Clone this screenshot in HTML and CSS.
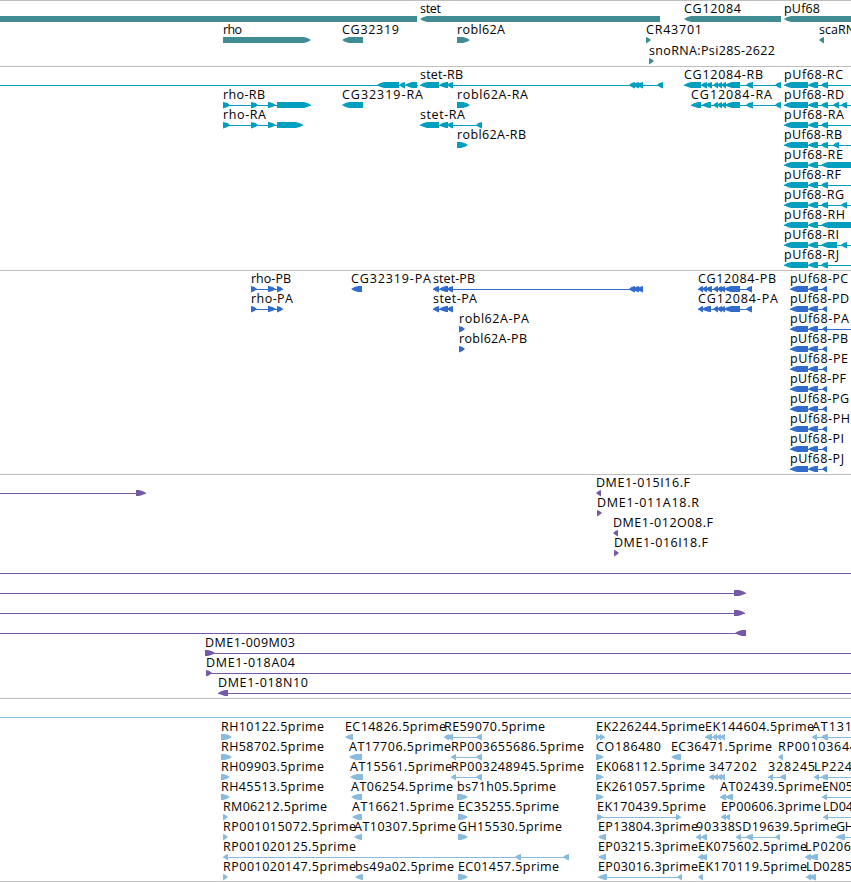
FILE: index.html
```html
<!DOCTYPE html>
<html lang="en">
<head>
    <meta charset="UTF-8">
    <meta name="viewport" content="width=device-width, initial-scale=1.0">
    <title>Genome Browser</title>
    <link rel="stylesheet" href="styles.css">
</head>
<body>
    <main class="browser">
        <section class="track genes"><svg id="genes" height="65"></svg></section>
        <section class="track transcripts"><svg id="transcripts" height="203"></svg></section>
        <section class="track proteins"><svg id="proteins" height="203"></svg></section>
        <section class="track clones"><svg id="clones" height="223"></svg></section>
        <section class="track spacer"></section>
        <section class="track ests"><svg id="ests" height="163"></svg></section>
    </main>
    <script src="script.js"></script>
</body>
</html>
```
FILE: styles.css
```css
body {
    margin: 0;
    background: white;
    overflow: hidden;
}
.browser {
    display: flex;
    flex-direction: column;
    border-top: 1px solid #bebebe;
}
.track {
    border-bottom: 1px solid #bebebe;
}
.track svg {
    display: block;
    width: 100%;
    overflow: hidden;
}
.track text {
    font-family: "Open Sans", "Noto Sans", sans-serif;
    font-size: 12.5px;
    fill: black;
}
.genes {
    fill: #408c92;
}
.transcripts {
    fill: #009fbf;
}
.proteins {
    fill: #316bcb;
}
.clones {
    fill: #7558a6;
}
.spacer {
    height: 18px;
    border-bottom-color: #88bbdd;
}
.ests {
    fill: #88bbdd;
}
```
FILE: script.js
```js
const NS = "http://www.w3.org/2000/svg";
const END = 860; // runs past the right edge of the view

// feature: [row, label, label start, label end, strand, [[from, to], ...], line]
// line defaults to the extent of the blocks
const stet = [[420, 439], [439, 448], [447, 453]];
const stetFar = [[629, 635], [633, 639], [637, 643]];
const cgTail = [[713, 718], [717, 722], [721, 726], [725, 740], [746, 753], [775, 781]];
const puf = [[784, 808], [808, 818], [821, 828]];
const pufOpen = [[784, 808], [808, 818], [821, END]];
const cgProt = [[713, 718], [717, 722], [720, 725], [724, 740], [746, 752]];
const pufProt = [[790, 808], [808, 818], [822, 827]];
const out = [784, END];

const genes = [
    [0, "", 0, 0, "", [[0, 417]]],
    [0, "stet", 420, 441, "-", [[420, 660]]],
    [0, "CG12084", 684, 741, "-", [[684, 781]]],
    [0, "pUf68", 784, 820, "-", [[784, END]]],
    [1, "rho", 223, 242, "+", [[223, 311]]],
    [1, "CG32319", 342, 399, "-", [[342, 363]]],
    [1, "robl62A", 457, 505, "+", [[457, 470]]],
    [1, "CR43701", 646, 702, "+", [[646, 651]]],
    [1, "scaRNA", 819, 863, "-", [[819, 824]]],
    [2, "snoRNA:Psi28S-2622", 649, 775, "+", [[649, 654]]]
];

const transcripts = [
    [0, "", 0, 0, "-", [[377, 399], [399, 405], [405, 417]], [0, 418]],
    [0, "stet-RB", 420, 463, "-", [...stet, ...stetFar, [657, 663]]],
    [0, "CG12084-RB", 684, 763, "-", [[684, 701], [701, 707], [706, 712], ...cgTail]],
    [1, "rho-RB", 223, 265, "+", [[223, 230], [251, 258], [268, 276], [277, 311]]],
    [1, "CG32319-RA", 342, 423, "-", [[342, 363]]],
    [1, "robl62A-RA", 457, 528, "+", [[457, 470]]],
    [1, "CG12084-RA", 691, 772, "-", [[691, 701], [702, 711], ...cgTail]],
    [2, "rho-RA", 223, 266, "+", [[223, 230], [251, 258], [268, 276], [277, 303]]],
    [2, "stet-RA", 420, 465, "-", [...stet, [476, 482]]],
    [3, "robl62A-RB", 457, 526, "+", [[457, 468]]],
    [0, "pUf68-RC", 784, 843, "-", puf, out],
    [1, "pUf68-RD", 784, 844, "-", [...puf, [833, 839], [841, 847]], out],
    [2, "pUf68-RA", 784, 844, "-", puf, out],
    [3, "pUf68-RB", 784, 842, "-", [...puf, [833, 839]], out],
    [4, "pUf68-RE", 784, 843, "-", pufOpen],
    [5, "pUf68-RF", 784, 841, "-", puf, out],
    [6, "pUf68-RG", 784, 844, "-", [...puf, [841, 847]], out],
    [7, "pUf68-RH", 784, 845, "-", pufOpen],
    [8, "pUf68-RI", 784, 839, "-", [[784, 808], [808, 818], [821, 837], [841, 847]], out],
    [9, "pUf68-RJ", 784, 839, "-", puf, out]
];

const proteins = [
    [0, "rho-PB", 251, 291, "+", [[251, 257], [268, 276], [277, 283]]],
    [1, "rho-PA", 251, 293, "+", [[251, 257], [268, 276], [277, 283]]],
    [0, "CG32319-PA", 351, 431, "-", [[351, 362]]],
    [0, "stet-PB", 433, 475, "-", [[433, 439], [439, 448], [447, 453], ...stetFar]],
    [1, "stet-PA", 433, 477, "-", [[433, 439], [439, 448], [447, 453]]],
    [2, "robl62A-PA", 459, 529, "+", [[459, 465]]],
    [3, "robl62A-PB", 459, 527, "+", [[459, 465]]],
    [0, "CG12084-PB", 698, 776, "-", [[698, 703], [702, 707], [706, 712], ...cgProt]],
    [1, "CG12084-PA", 698, 778, "-", [[698, 703], [702, 711], ...cgProt]],
    [0, "pUf68-PC", 790, 848, "-", pufProt],
    [1, "pUf68-PD", 790, 849, "-", pufProt],
    [2, "pUf68-PA", 790, 849, "-", pufProt, [790, END]],
    [3, "pUf68-PB", 790, 848, "-", pufProt],
    [4, "pUf68-PE", 790, 848, "-", pufProt],
    [5, "pUf68-PF", 790, 846, "-", pufProt],
    [6, "pUf68-PG", 790, 849, "-", pufProt],
    [7, "pUf68-PH", 790, 850, "-", pufProt],
    [8, "pUf68-PI", 790, 844, "-", pufProt],
    [9, "pUf68-PJ", 790, 844, "-", pufProt]
];

const clones = [
    [0, "", 0, 0, "+", [[136, 146]], [0, 146]],
    [0, "DME1-015I16.F", 596, 690, "-", [[596, 601]]],
    [1, "DME1-011A18.R", 597, 699, "+", [[597, 602]]],
    [2, "DME1-012O08.F", 613, 713, "-", [[613, 618]]],
    [3, "DME1-016I18.F", 614, 708, "+", [[614, 619]]],
    [4, "", 0, 0, "", [], [0, END]],
    [5, "", 0, 0, "+", [[734, 746]], [0, 746]],
    [6, "", 0, 0, "+", [[734, 745]], [0, 745]],
    [7, "", 0, 0, "-", [[735, 746]], [0, 746]],
    [8, "DME1-009M03", 205, 295, "+", [[205, 215]], [205, END]],
    [9, "DME1-018A04", 206, 295, "+", [[206, 212]], [206, END]],
    [10, "DME1-018N10", 218, 308, "-", [[218, 228]], [218, END]]
];

const ests = [
    [0, "RH10122.5prime", 221, 324, "+", [[221, 232]]],
    [0, "EC14826.5prime", 345, 446, "-", [[345, 353]]],
    [0, "RE59070.5prime", 444, 545, "-", [[444, 449], [447, 453], [476, 482]]],
    [0, "EK226244.5prime", 596, 705, "+", [[596, 601], [600, 605]]],
    [0, "EK144604.5prime", 705, 814, "-", [[705, 712], [712, 717], [716, 721], [720, 725]]],
    [0, "AT131", 812, 852, "-", [[812, 817], [821, 828]], [812, END]],
    [1, "RH58702.5prime", 221, 324, "+", [[221, 232]]],
    [1, "AT17706.5prime", 349, 451, "-", [[349, 362]]],
    [1, "RP003655686.5prime", 451, 584, "-", [[451, 456], [476, 482]]],
    [1, "CO186480", 596, 661, "+", [[596, 604]]],
    [1, "EC36471.5prime", 671, 772, "-", [[671, 681]]],
    [1, "RP00103644", 778, 857, "-", [[778, 783]]],
    [2, "RH09903.5prime", 221, 324, "+", [[221, 230]]],
    [2, "AT15561.5prime", 350, 452, "-", [[350, 363]]],
    [2, "RP003248945.5prime", 451, 584, "-", [[451, 456], [476, 482]]],
    [2, "EK068112.5prime", 596, 705, "+", [[596, 604]]],
    [2, "347202", 709, 757, "-", [[709, 714], [713, 718], [717, 722], [720, 725]]],
    [2, "328245", 768, 815, "-", [[768, 773], [780, 786]]],
    [2, "LP224", 814, 852, "-", [[814, 819], [821, 828]], [814, END]],
    [3, "RH45513.5prime", 221, 324, "+", [[221, 230]]],
    [3, "AT06254.5prime", 351, 453, "-", [[351, 362]]],
    [3, "bs71h05.5prime", 457, 556, "+", [[457, 468]]],
    [3, "EK261057.5prime", 596, 705, "+", [[596, 604]]],
    [3, "AT02439.5prime", 720, 822, "-", [[720, 726], [725, 733]]],
    [3, "EN05", 822, 853, "-", [[822, 827]], [822, END]],
    [4, "RM06212.5prime", 223, 327, "+", [[223, 228]]],
    [4, "AT16621.5prime", 352, 454, "-", [[352, 362]]],
    [4, "EC35255.5prime", 458, 559, "+", [[458, 468]]],
    [4, "EK170439.5prime", 597, 706, "+", [[597, 603], [676, 681]]],
    [4, "EP00606.3prime", 721, 821, "-", [[721, 726], [725, 730]]],
    [4, "LD04", 823, 853, "-", [[823, 828]], [823, END]],
    [5, "RP001015072.5prime", 223, 356, "+", [[223, 228]]],
    [5, "AT10307.5prime", 354, 456, "-", [[354, 362]]],
    [5, "GH15530.5prime", 458, 562, "+", [[458, 468]]],
    [5, "EP13804.3prime", 598, 698, "-", [[598, 606]]],
    [5, "90338", 696, 735, "-", [[696, 701], [701, 707]]],
    [5, "SD19639.5prime", 735, 837, "-", [[736, 741], [746, 753], [775, 780]]],
    [5, "GH", 836, 854, "-", [[836, 845]], [836, END]],
    [6, "RP001020125.5prime", 223, 356, "-", [[223, 228], [515, 521], [563, 569]]],
    [6, "EP03215.3prime", 598, 698, "-", [[598, 606]]],
    [6, "EK075602.5prime", 698, 807, "-", [[698, 703], [701, 707]]],
    [6, "LP0206", 805, 851, "-", [[805, 811], [809, 818]]],
    [7, "RP001020147.5prime", 223, 356, "+", [[223, 228]]],
    [7, "bs49a02.5prime", 355, 454, "-", [[355, 363]]],
    [7, "EC01457.5prime", 458, 559, "+", [[458, 468]]],
    [7, "EP03016.3prime", 598, 698, "-", [[598, 607], [677, 682]]],
    [7, "EK170119.5prime", 698, 807, "-", [[698, 703]]],
    [7, "LD0285", 806, 852, "-", [[806, 811], [809, 816]]]
];

function add(svg, name, attrs) {
    const el = document.createElementNS(NS, name);
    for (const key in attrs) {
        el.setAttribute(key, attrs[key]);
    }
    svg.appendChild(el);
    return el;
}

function blockPoints(from, to, top, strand) {
    const mid = top + 3;
    const bottom = top + 6;
    if (strand === "") {
        return `${from},${top} ${to},${top} ${to},${bottom} ${from},${bottom}`;
    }
    const tip = strand === "+" ? to : from;
    const back = strand === "+" ? from : to;
    const dir = strand === "+" ? -1 : 1;
    if (to - from <= 7) {
        const side = tip + dir * 2.5;
        return `${tip},${mid} ${side},${top + 1} ${back},${top} ` +
            `${back},${bottom + 0.5} ${side},${bottom - 1}`;
    }
    // long blocks get a blunt, rounded arrow head
    const half = tip + dir * 3;
    const neck = tip + dir * 7;
    return `${tip},${mid} ${half},${top + 1.2} ${neck},${top} ${back},${top} ` +
        `${back},${bottom} ${neck},${bottom} ${half},${bottom - 1.2}`;
}

function drawTrack(id, features, firstTop, pitch) {
    const svg = document.getElementById(id);
    for (const [row, label, start, end, strand, blocks, line] of features) {
        const top = firstTop + row * pitch;
        if (line || blocks.length > 1) {
            const [a, b] = line || [blocks[0][0], blocks[blocks.length - 1][1]];
            add(svg, "rect", { x: a, y: top + 3, width: b - a, height: 1 });
        }
        for (const [from, to] of blocks) {
            add(svg, "polygon", { points: blockPoints(from, to, top, strand) });
        }
        if (label) {
            add(svg, "text", { x: start, y: top - 3, textLength: end - start }).textContent = label;
        }
    }
}

drawTrack("genes", genes, 15, 21);
drawTrack("transcripts", transcripts, 15, 20);
drawTrack("proteins", proteins, 15, 20);
drawTrack("clones", clones, 15, 20);
drawTrack("ests", ests, 16, 20);
```
